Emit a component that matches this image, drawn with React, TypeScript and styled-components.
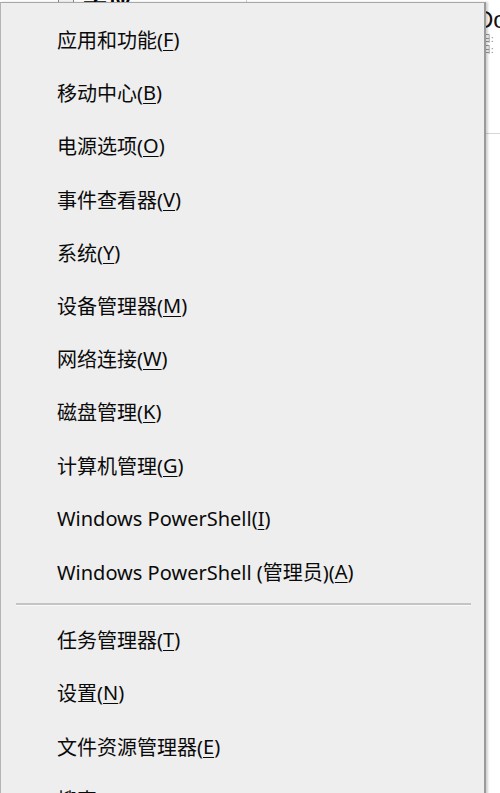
import React from 'react'
import styled, { createGlobalStyle } from 'styled-components'

const GlobalStyle = createGlobalStyle`
  html, body {
    margin: 0;
    padding: 0;
    background: #ffffff;
    overflow: hidden;
  }
  body {
    font-family: "Noto Sans", "Noto Sans CJK SC", sans-serif;
  }
`

type Item = { label: string; key: string }

const topItems: Item[] = [
  { label: '应用和功能', key: 'F' },
  { label: '移动中心', key: 'B' },
  { label: '电源选项', key: 'O' },
  { label: '事件查看器', key: 'V' },
  { label: '系统', key: 'Y' },
  { label: '设备管理器', key: 'M' },
  { label: '网络连接', key: 'W' },
  { label: '磁盘管理', key: 'K' },
  { label: '计算机管理', key: 'G' },
  { label: 'Windows PowerShell', key: 'I' },
  { label: 'Windows PowerShell (管理员)', key: 'A' },
]

const bottomItems: Item[] = [
  { label: '任务管理器', key: 'T' },
  { label: '设置', key: 'N' },
  { label: '文件资源管理器', key: 'E' },
  { label: '搜索', key: 'S' },
]

const MenuEntry: React.FC<{ item: Item }> = ({ item }) => (
  <MenuItem>
    {item.label}(<Mnemonic>{item.key}</Mnemonic>)
  </MenuItem>
)

const App: React.FC = () => {
  return (
    <>
      <GlobalStyle />
      <Screen>
        <Backdrop>
          <BackHeader>
            <CheckBox />
            <BackTitle>文档</BackTitle>
            <BackDivider />
          </BackHeader>
          <BackSide>
            <DocTitle>Doc</DocTitle>
            <DocMeta>日:</DocMeta>
            <DocMeta>日:</DocMeta>
            <DocRule />
          </BackSide>
        </Backdrop>

        <Menu>
          {topItems.map((item) => (
            <MenuEntry key={item.key} item={item} />
          ))}
          <Separator />
          {bottomItems.map((item) => (
            <MenuEntry key={item.key} item={item} />
          ))}
        </Menu>
      </Screen>
    </>
  )
}

const Screen = styled.div`
  position: relative;
  width: 500px;
  height: 793px;
  overflow: hidden;
  background: #ffffff;
`

const Backdrop = styled.div`
  display: flex;
  flex-direction: column;
  height: 100%;
`

const BackHeader = styled.div`
  display: flex;
  align-items: flex-end;
  height: 3px;
  padding-left: 58px;
  overflow: hidden;
`

const CheckBox = styled.div`
  flex: none;
  width: 14px;
  height: 14px;
  margin-bottom: -12px;
  border: 1px solid #8a8a8a;
  background: #f4f4f4;
`

const BackTitle = styled.div`
  margin-left: 9px;
  margin-bottom: -18px;
  font-size: 24px;
  font-weight: 700;
  line-height: 24px;
  color: #000;
`

const BackDivider = styled.div`
  align-self: stretch;
  width: 1px;
  margin-left: 115px;
  background: #d0d0d0;
`

const BackSide = styled.div`
  display: flex;
  flex-direction: column;
  padding-left: 476px;
  padding-top: 4px;
`

const DocTitle = styled.div`
  font-family: "Liberation Sans", sans-serif;
  font-size: 24px;
  line-height: 26px;
  color: #111;
  white-space: nowrap;
`

const DocMeta = styled.div`
  font-family: "Noto Sans CJK SC", sans-serif;
  font-size: 9px;
  line-height: 11px;
  color: #888;
  padding-left: 6px;
  white-space: nowrap;
`

const DocRule = styled.div`
  height: 1px;
  margin-top: 78px;
  background: #d6d6d6;
`

const Menu = styled.div`
  position: absolute;
  top: 2px;
  left: 0;
  width: 486px;
  height: 820px;
  box-sizing: border-box;
  padding-top: 10px;
  background: #eeeeee;
  border: 1px solid #a8a8a8;
  border-left-color: #b4b4b4;
  border-right: 2px solid #9a9a9a;
  box-shadow: 2px 0 2px rgba(0, 0, 0, 0.18);
  display: flex;
  flex-direction: column;
`

const MenuItem = styled.div`
  flex: none;
  display: flex;
  align-items: center;
  height: 53.2px;
  padding-left: 56px;
  font-size: 20px;
  color: #0a0a0a;
  white-space: pre;
`

const Mnemonic = styled.span`
  text-decoration: underline;
  text-underline-offset: 3px;
  text-decoration-thickness: 1px;
`

const Separator = styled.div`
  flex: none;
  height: 2px;
  margin: 5px 13px 7px 15px;
  background: #c4c4c4;
  border-bottom: 1px solid #f8f8f8;
`

export default App
